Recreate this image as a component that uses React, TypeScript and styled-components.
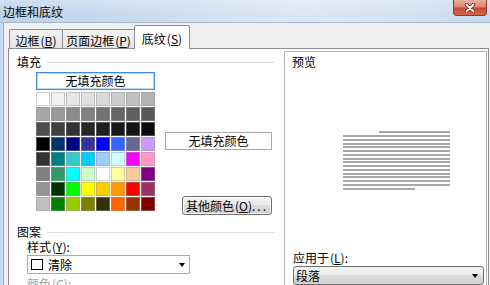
import React from "react";
import styled, { createGlobalStyle } from "styled-components";

const GlobalStyle = createGlobalStyle`
  html, body {
    margin: 0;
    padding: 0;
  }
  body {
    font-family: "Noto Sans CJK SC", "Noto Sans", sans-serif;
    font-size: 12px;
    color: #000;
    background: #f0f0f0;
  }
`;

const swatches = [
  ["#ffffff", "#f2f2f2", "#e6e6e6", "#e0e0e0", "#d9d9d9", "#cccccc", "#c0c0c0", "#b3b3b3"],
  ["#a6a6a6", "#999999", "#8c8c8c", "#808080", "#737373", "#666666", "#606060", "#595959"],
  ["#4d4d4d", "#404040", "#333333", "#262626", "#202020", "#1a1a1a", "#141414", "#0d0d0d"],
  ["#000000", "#003366", "#000080", "#333399", "#0000ff", "#3366ff", "#666699", "#cc99ff"],
  ["#333333", "#008080", "#33cccc", "#00ccff", "#99ccff", "#ccffff", "#ff00ff", "#ff99cc"],
  ["#808080", "#339966", "#00ffff", "#ccffcc", "#ffffff", "#ffff99", "#ffcc99", "#800080"],
  ["#969696", "#003300", "#00ff00", "#ffff00", "#ffcc00", "#ff9900", "#ff0000", "#993366"],
  ["#c0c0c0", "#008000", "#99cc00", "#808000", "#333300", "#ff6600", "#993300", "#800000"],
];

const Window = styled.div`
  width: 490px;
  height: 285px;
  overflow: hidden;
  background: #c9dcef;
  display: flex;
  flex-direction: column;
`;

const TitleBar = styled.div`
  height: 22px;
  flex: none;
  display: flex;
  align-items: flex-start;
  background:
    linear-gradient(rgba(255, 255, 255, 0.25), rgba(255, 255, 255, 0) 60%),
    linear-gradient(90deg, #bed3ea 0%, #cbdcef 30%, #dce8f5 62%, #d2e1f1 85%, #c8daee 100%);
  border-bottom: 1px solid #a3b8d0;
`;

const Title = styled.span`
  margin: 5px 0 0 3px;
  line-height: 14px;
`;

const CloseButton = styled.div`
  margin-left: auto;
  margin-right: 3px;
  width: 34px;
  height: 16px;
  box-sizing: border-box;
  border: 1px solid #8b3a2b;
  border-top: none;
  border-radius: 0 0 4px 4px;
  background: linear-gradient(#eab0a3 0%, #d98570 45%, #c64a30 55%, #d8674c 100%);
  display: flex;
  align-items: center;
  justify-content: center;
`;

const Client = styled.div`
  flex: 1;
  min-height: 0;
  margin-left: 3px;
  border-left: 1px solid #a0a8b4;
  background: #f0f0f0;
  display: flex;
  flex-direction: column;
`;

const TabStrip = styled.div`
  height: 25px;
  flex: none;
  display: flex;
  align-items: flex-end;
  padding-left: 5px;
`;

const Tab = styled.div<{ $active?: boolean; $w: number }>`
  position: relative;
  z-index: ${(p) => (p.$active ? 2 : 1)};
  width: ${(p) => p.$w}px;
  height: ${(p) => (p.$active ? 24 : 19)}px;
  box-sizing: border-box;
  margin-bottom: ${(p) => (p.$active ? -1 : 0)}px;
  padding-top: ${(p) => (p.$active ? 6 : 4)}px;
  border: 1px solid #898c95;
  border-bottom: none;
  border-radius: 2px 2px 0 0;
  background: ${(p) => (p.$active ? "#ffffff" : "linear-gradient(#f4f4f4, #e4e4e4)")};
  line-height: 14px;
  text-align: center;
  white-space: nowrap;

  & + & {
    margin-left: -1px;
  }
`;

const Mnemonic = styled.span`
  margin-left: 1px;
`;

const Panel = styled.div`
  flex: 1;
  min-height: 0;
  margin-left: 4px;
  width: 481px;
  box-sizing: border-box;
  background: #ffffff;
  border: 1px solid #898c95;
  border-bottom: none;
  display: flex;
  align-items: flex-start;
`;

const LeftGroup = styled.div`
  width: 266px;
  flex: none;
  display: flex;
  flex-direction: column;
`;

const SectionHeader = styled.div<{ $top: number }>`
  margin-top: ${(p) => p.$top}px;
  padding-left: 8px;
  height: 14px;
  line-height: 14px;
  display: flex;
  align-items: center;
  gap: 6px;

  &::after {
    content: "";
    flex: 1;
    height: 1px;
    background: #dadada;
  }
`;

const FillRow = styled.div`
  margin-top: 3px;
  padding-left: 27px;
  display: flex;
  gap: 10px;
`;

const FillLeft = styled.div`
  width: 119px;
  display: flex;
  flex-direction: column;
`;

const NoFillButton = styled.div`
  height: 18px;
  box-sizing: border-box;
  border: 1px solid #3d8ee0;
  box-shadow: inset 0 0 0 1px #b9dbf7;
  line-height: 16px;
  text-align: center;
`;

const SwatchGrid = styled.div`
  margin-top: 2px;
  display: grid;
  grid-template-columns: repeat(8, 14px);
  grid-auto-rows: 14px;
  gap: 1px;
`;

const Swatch = styled.div<{ $c: string }>`
  background: ${(p) => p.$c};
  box-shadow: inset 0 0 0 1px rgba(150, 150, 150, 0.45);
`;

const FillRight = styled.div`
  width: 107px;
  display: flex;
  flex-direction: column;
  align-items: flex-end;
`;

const NoFillLabel = styled.div`
  margin-top: 60px;
  width: 107px;
  height: 18px;
  box-sizing: border-box;
  border: 1px solid #a7a7a7;
  background: #ffffff;
  line-height: 16px;
  text-align: center;
`;

const PushButton = styled.div`
  margin-top: 46px;
  width: 90px;
  height: 19px;
  box-sizing: border-box;
  border: 1px solid #707070;
  border-radius: 3px;
  background: linear-gradient(#f2f2f2 0%, #ebebeb 49%, #dddddd 50%, #cfcfcf 100%);
  box-shadow: inset 0 0 0 1px rgba(255, 255, 255, 0.7);
  line-height: 17px;
  text-align: center;
  white-space: nowrap;
`;

const Dots = styled.span`
  letter-spacing: 2px;
`;

const FieldLabel = styled.div<{ $top: number; $left: number; $muted?: boolean }>`
  margin-top: ${(p) => p.$top}px;
  padding-left: ${(p) => p.$left}px;
  height: 14px;
  line-height: 14px;
  color: ${(p) => (p.$muted ? "#a0a0a0" : "#000")};
  white-space: nowrap;
`;

const Combo = styled.div<{ $w: number; $left: number; $raised?: boolean }>`
  margin-top: 1px;
  margin-left: ${(p) => p.$left}px;
  width: ${(p) => p.$w}px;
  height: 19px;
  box-sizing: border-box;
  padding: 0 ${(p) => (p.$raised ? 5 : 4)}px 0 ${(p) => (p.$raised ? 2 : 3)}px;
  border: 1px solid ${(p) => (p.$raised ? "#707070" : "#a9abb0")};
  border-radius: ${(p) => (p.$raised ? 3 : 0)}px;
  background: ${(p) =>
    p.$raised
      ? "linear-gradient(#f2f2f2 0%, #ebebeb 49%, #dddddd 50%, #cfcfcf 100%)"
      : "#ffffff"};
  display: flex;
  align-items: center;
  gap: 5px;
  line-height: 14px;
`;

const PatternBox = styled.span`
  width: 12px;
  height: 11px;
  box-sizing: border-box;
  border: 1px solid #000;
  background: #fff;
  flex: none;
`;

const Arrow = styled.span`
  margin-left: auto;
  width: 0;
  height: 0;
  border-left: 3.5px solid transparent;
  border-right: 3.5px solid transparent;
  border-top: 4px solid #000;
`;

const PreviewBox = styled.div`
  margin: 2px 0 0 9px;
  width: 203px;
  height: 260px;
  box-sizing: border-box;
  border: 1px solid #b4b4b4;
  display: flex;
  flex-direction: column;
`;

const PreviewTitle = styled.div`
  margin-top: 3px;
  padding-left: 7px;
  line-height: 14px;
`;

const PreviewLines = styled.div`
  margin: 62px 0 0 58px;
  width: 107px;
  display: flex;
  flex-direction: column;
`;

const TextLine = styled.div<{ $indent?: number; $w?: number }>`
  height: 2px;
  margin-left: ${(p) => p.$indent ?? 0}px;
  width: ${(p) => (p.$w ? `${p.$w}px` : "auto")};
  background: #a8a8a8;
  margin-bottom: 2px;

  &:nth-child(4n) {
    margin-bottom: 1px;
  }
`;

const lineCount = 16;

export default function App() {
  return (
    <>
      <GlobalStyle />
      <Window>
        <TitleBar>
          <Title>边框和底纹</Title>
          <CloseButton>
            <svg width="12" height="10" viewBox="0 0 12 10">
              <path d="M2.5 1.5 L9.5 8.5 M9.5 1.5 L2.5 8.5" stroke="#6b2418" strokeWidth="3.4" strokeLinecap="round" />
              <path d="M2.5 1.5 L9.5 8.5 M9.5 1.5 L2.5 8.5" stroke="#ffffff" strokeWidth="1.8" strokeLinecap="round" />
            </svg>
          </CloseButton>
        </TitleBar>
        <Client>
          <TabStrip>
            <Tab $w={54}>
              边框<Mnemonic>(<u>B</u>)</Mnemonic>
            </Tab>
            <Tab $w={73}>
              页面边框<Mnemonic>(<u>P</u>)</Mnemonic>
            </Tab>
            <Tab $w={56} $active>
              底纹<Mnemonic>(<u>S</u>)</Mnemonic>
            </Tab>
          </TabStrip>
          <Panel>
            <LeftGroup>
              <SectionHeader $top={6}>填充</SectionHeader>
              <FillRow>
                <FillLeft>
                  <NoFillButton>无填充颜色</NoFillButton>
                  <SwatchGrid>
                    {swatches.flat().map((c, i) => (
                      <Swatch key={i} $c={c} />
                    ))}
                  </SwatchGrid>
                </FillLeft>
                <FillRight>
                  <NoFillLabel>无填充颜色</NoFillLabel>
                  <PushButton>
                    其他颜色<Mnemonic>(<u>O</u>)</Mnemonic>
                    <Dots>...</Dots>
                  </PushButton>
                </FillRight>
              </FillRow>
              <SectionHeader $top={10}>图案</SectionHeader>
              <FieldLabel $top={1} $left={18}>
                样式<Mnemonic>(<u>Y</u>)</Mnemonic>:
              </FieldLabel>
              <Combo $w={163} $left={18}>
                <PatternBox />
                清除
                <Arrow />
              </Combo>
              <FieldLabel $top={3} $left={18} $muted>
                颜色<Mnemonic>(<u>C</u>)</Mnemonic>:
              </FieldLabel>
            </LeftGroup>
            <PreviewBox>
              <PreviewTitle>预览</PreviewTitle>
              <PreviewLines>
                {Array.from({ length: lineCount }, (_, i) => (
                  <TextLine
                    key={i}
                    $indent={i === 0 ? 36 : 0}
                    $w={i === lineCount - 1 ? 72 : undefined}
                  />
                ))}
              </PreviewLines>
              <FieldLabel $top={60} $left={8}>
                应用于<Mnemonic>(<u>L</u>)</Mnemonic>:
              </FieldLabel>
              <Combo $w={191} $left={8} $raised>
                段落
                <Arrow />
              </Combo>
            </PreviewBox>
          </Panel>
        </Client>
      </Window>
    </>
  );
}
